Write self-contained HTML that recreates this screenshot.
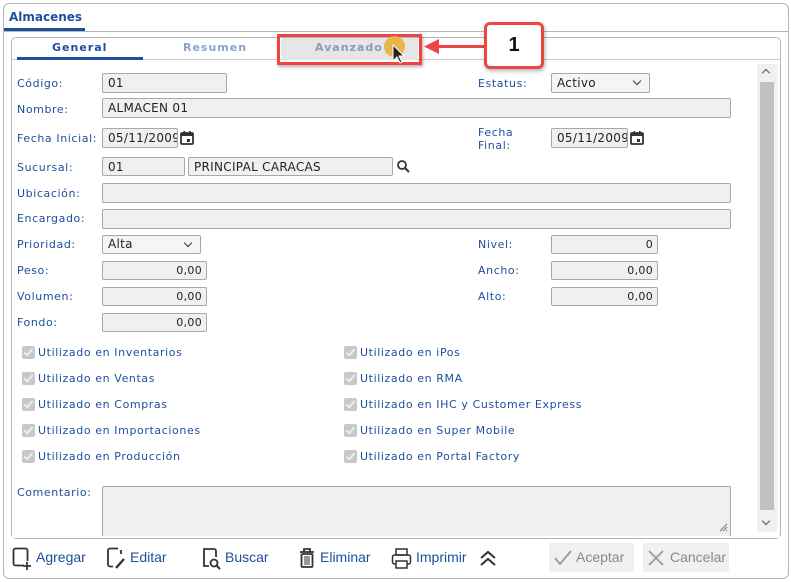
<!DOCTYPE html><html><head><style>
*{box-sizing:border-box;margin:0;padding:0}
body{width:791px;height:582px;background:#fff;position:relative;overflow:hidden;font-family:"DejaVu Sans","Liberation Sans",sans-serif;font-size:11px;color:#1d4f9c}
.a{position:absolute}
.l{position:absolute;letter-spacing:0.6px;line-height:13px}
.i{position:absolute;border:1px solid #a8a8a8;background:#f0f0f0;border-radius:2px;color:#222;font-size:12px;letter-spacing:0.3px;padding-left:5px;line-height:18px}
.r{text-align:right;padding-right:4px;font-size:11px}
.cb{position:absolute;width:13px;height:13px;background:#c8c8c8;border-radius:2px}
.cb:after{content:"";position:absolute;left:4px;top:1px;width:3px;height:7px;border:solid #eee;border-width:0 2px 2px 0;transform:rotate(40deg)}
.sel:after{content:"";position:absolute;right:9px;top:4px;width:5px;height:5px;border:solid #333;border-width:0 1.3px 1.3px 0;transform:rotate(45deg)}
.bt{position:absolute;top:549px;font-family:"Liberation Sans Narrow","Liberation Sans",sans-serif;font-size:14px;color:#1d4f9c}
</style></head><body>
<div class="a" style="left:3px;top:3px;width:786px;height:576px;border:1px solid #b5b5b5;border-radius:6px"></div>
<div class="a" style="left:3px;top:31px;width:786px;height:1px;background:#b5b5b5"></div>
<div class="a" style="left:9px;top:10px;font-weight:bold;font-size:12px;color:#1d4f9c;font-family:'DejaVu Sans',sans-serif">Almacenes</div>
<div class="a" style="left:4px;top:28px;width:81px;height:3px;background:#1d4f9c"></div>
<div class="a" style="left:11px;top:37px;width:770px;height:502px;border:1px solid #b5b5b5;border-radius:5px"></div>
<div class="a" style="left:12px;top:59px;width:768px;height:1px;background:#c8c8c8"></div>
<div class="a" style="left:52px;top:41px;font-weight:bold;letter-spacing:1px;color:#1d4f9c">General</div>
<div class="a" style="left:17px;top:57px;width:126px;height:3px;background:#1d4f9c"></div>
<div class="a" style="left:183px;top:41px;font-weight:bold;letter-spacing:1px;color:#8aa4cf">Resumen</div>
<div class="a" style="left:281px;top:38px;width:137px;height:22px;background:#e6e6e6"></div>
<div class="a" style="left:315px;top:41px;font-weight:bold;letter-spacing:1px;color:#8a9ab8">Avanzado</div>

<div class="l" style="left:17px;top:77px">Código:</div><div class="i" style="left:102px;top:73px;width:125px;height:20px">01</div>
<div class="l" style="left:478px;top:77px">Estatus:</div><div class="i sel" style="left:551px;top:73px;width:99px;height:20px;background:#f5f5f5">Activo</div>
<div class="l" style="left:17px;top:103px">Nombre:</div><div class="i" style="left:102px;top:98px;width:629px;height:20px">ALMACEN 01</div>
<div class="l" style="left:17px;top:132px">Fecha Inicial:</div><div class="i" style="left:102px;top:128px;width:76px;height:20px;overflow:hidden;white-space:nowrap">05/11/2009</div>
<svg class="a" style="left:180px;top:131px" width="14" height="14"><rect x="1" y="2" width="12" height="11" rx="1" fill="none" stroke="#333" stroke-width="1.8"/><rect x="1" y="2" width="12" height="3" fill="#333"/><rect x="3.5" y="0" width="1.6" height="3" fill="#333"/><rect x="9" y="0" width="1.6" height="3" fill="#333"/><rect x="7" y="8" width="3" height="3" fill="#333"/></svg>
<div class="l" style="left:478px;top:126px">Fecha<br>Final:</div><div class="i" style="left:551px;top:128px;width:77px;height:20px;overflow:hidden;white-space:nowrap">05/11/2009</div>
<svg class="a" style="left:630px;top:131px" width="14" height="14"><rect x="1" y="2" width="12" height="11" rx="1" fill="none" stroke="#333" stroke-width="1.8"/><rect x="1" y="2" width="12" height="3" fill="#333"/><rect x="3.5" y="0" width="1.6" height="3" fill="#333"/><rect x="9" y="0" width="1.6" height="3" fill="#333"/><rect x="7" y="8" width="3" height="3" fill="#333"/></svg>
<div class="l" style="left:17px;top:161px">Sucursal:</div><div class="i" style="left:102px;top:157px;width:83px;height:19px">01</div><div class="i" style="left:188px;top:157px;width:205px;height:19px">PRINCIPAL CARACAS</div>
<svg class="a" style="left:396px;top:159px" width="15" height="15"><circle cx="6" cy="6" r="4" fill="none" stroke="#333" stroke-width="1.8"/><line x1="9" y1="9" x2="13" y2="13" stroke="#333" stroke-width="2"/></svg>
<div class="l" style="left:17px;top:187px">Ubicación:</div><div class="i" style="left:102px;top:183px;width:629px;height:20px"></div>
<div class="l" style="left:17px;top:212px">Encargado:</div><div class="i" style="left:102px;top:209px;width:629px;height:20px"></div>
<div class="l" style="left:17px;top:238px">Prioridad:</div><div class="i sel" style="left:102px;top:235px;width:99px;height:19px;background:#f5f5f5;line-height:17px">Alta</div>
<div class="l" style="left:478px;top:238px">Nivel:</div><div class="i r" style="left:551px;top:235px;width:107px;height:19px;line-height:17px">0</div>
<div class="l" style="left:17px;top:264px">Peso:</div><div class="i r" style="left:102px;top:261px;width:105px;height:19px;line-height:17px">0,00</div>
<div class="l" style="left:478px;top:264px">Ancho:</div><div class="i r" style="left:551px;top:261px;width:107px;height:19px;line-height:17px">0,00</div>
<div class="l" style="left:17px;top:290px">Volumen:</div><div class="i r" style="left:102px;top:287px;width:105px;height:19px;line-height:17px">0,00</div>
<div class="l" style="left:478px;top:290px">Alto:</div><div class="i r" style="left:551px;top:287px;width:107px;height:19px;line-height:17px">0,00</div>
<div class="l" style="left:17px;top:316px">Fondo:</div><div class="i r" style="left:102px;top:313px;width:105px;height:19px;line-height:17px">0,00</div>

<div class="cb" style="left:22px;top:346px"></div><div class="l" style="left:38px;top:346px">Utilizado en Inventarios</div>
<div class="cb" style="left:22px;top:372px"></div><div class="l" style="left:38px;top:372px">Utilizado en Ventas</div>
<div class="cb" style="left:22px;top:398px"></div><div class="l" style="left:38px;top:398px">Utilizado en Compras</div>
<div class="cb" style="left:22px;top:424px"></div><div class="l" style="left:38px;top:424px">Utilizado en Importaciones</div>
<div class="cb" style="left:22px;top:450px"></div><div class="l" style="left:38px;top:450px">Utilizado en Producción</div>
<div class="cb" style="left:344px;top:346px"></div><div class="l" style="left:360px;top:346px">Utilizado en iPos</div>
<div class="cb" style="left:344px;top:372px"></div><div class="l" style="left:360px;top:372px">Utilizado en RMA</div>
<div class="cb" style="left:344px;top:398px"></div><div class="l" style="left:360px;top:398px">Utilizado en IHC y Customer Express</div>
<div class="cb" style="left:344px;top:424px"></div><div class="l" style="left:360px;top:424px">Utilizado en Super Mobile</div>
<div class="cb" style="left:344px;top:450px"></div><div class="l" style="left:360px;top:450px">Utilizado en Portal Factory</div>

<div class="l" style="left:17px;top:486px">Comentario:</div>
<div class="i" style="left:102px;top:486px;width:629px;height:50px;border-bottom:none;border-radius:2px 2px 0 0"></div>
<svg class="a" style="left:718px;top:522px" width="10" height="10"><path d="M9 2L2 9M9 5L5 9M9 8L8 9" stroke="#777" stroke-width="1"/></svg>
<div class="a" style="left:12px;top:536px;width:768px;height:2px;background:#fff"></div>

<div class="a" style="left:757px;top:64px;width:20px;height:468px;background:#f0f0f0"></div>
<div class="a" style="left:760px;top:82px;width:14px;height:428px;background:#c1c1c1"></div>
<div class="a" style="left:763px;top:70px;width:6px;height:6px;border:solid #555;border-width:1.5px 0 0 1.5px;transform:rotate(45deg)"></div>
<div class="a" style="left:763px;top:518px;width:6px;height:6px;border:solid #555;border-width:0 1.5px 1.5px 0;transform:rotate(45deg)"></div>

<svg class="a" style="left:12px;top:547px" width="22" height="24"><rect x="1.5" y="1.5" width="14" height="17" rx="2" fill="none" stroke="#333" stroke-width="1.8"/><rect x="12" y="14" width="6" height="6" fill="#fff"/><path d="M15 15v8M11 19h8" stroke="#333" stroke-width="1.8"/></svg>
<div class="bt" style="left:36px">Agregar</div>
<svg class="a" style="left:106px;top:547px" width="22" height="24"><path d="M12 1.5H4a2 2 0 0 0-2 2v14a2 2 0 0 0 2 2h3M15 7V3" fill="none" stroke="#333" stroke-width="1.8"/><path d="M10 21l8-9" stroke="#333" stroke-width="2.4"/></svg>
<div class="bt" style="left:130px">Editar</div>
<svg class="a" style="left:201px;top:547px" width="22" height="24"><path d="M8 19H3V2h10a2 2 0 0 1 2 2v6" fill="none" stroke="#333" stroke-width="1.8"/><circle cx="13" cy="16" r="3.5" fill="none" stroke="#333" stroke-width="1.8"/><line x1="15.5" y1="18.5" x2="19" y2="22" stroke="#333" stroke-width="2"/></svg>
<div class="bt" style="left:225px">Buscar</div>
<svg class="a" style="left:297px;top:547px" width="20" height="22"><path d="M3 5h14M7 5V2h6v3" fill="none" stroke="#333" stroke-width="1.8"/><rect x="4.5" y="7" width="11" height="13" rx="1" fill="none" stroke="#333" stroke-width="1.8"/><path d="M8 9v9M10 9v9M12 9v9" stroke="#333" stroke-width="1"/></svg>
<div class="bt" style="left:320px">Eliminar</div>
<svg class="a" style="left:391px;top:548px" width="22" height="22"><rect x="5" y="1" width="11" height="6" fill="none" stroke="#333" stroke-width="1.5"/><rect x="1.5" y="7" width="18" height="9" rx="2" fill="none" stroke="#333" stroke-width="1.5"/><rect x="5" y="13" width="11" height="7" fill="#fff" stroke="#333" stroke-width="1.5"/></svg>
<div class="bt" style="left:416px">Imprimir</div>
<svg class="a" style="left:478px;top:549px" width="20" height="18"><path d="M3 9l7-6 7 6M3 16l7-6 7 6" fill="none" stroke="#333" stroke-width="2"/></svg>
<div class="a" style="left:549px;top:543px;width:85px;height:29px;background:#f0f0f0"></div>
<svg class="a" style="left:553px;top:549px" width="20" height="18"><path d="M2 9l5 6L18 2" fill="none" stroke="#999" stroke-width="1.8"/></svg>
<div class="bt" style="left:576px;color:#888">Aceptar</div>
<div class="a" style="left:643px;top:543px;width:86px;height:29px;background:#f0f0f0"></div>
<svg class="a" style="left:647px;top:549px" width="18" height="18"><path d="M2 2l14 14M16 2L2 16" stroke="#999" stroke-width="1.6"/></svg>
<div class="bt" style="left:670px;color:#888">Cancelar</div>

<div class="a" style="left:277px;top:34px;width:145px;height:31px;border:3px solid #ee4444;box-shadow:1px 2px 3px rgba(0,0,0,.3)"></div>
<div class="a" style="left:384px;top:36px;width:21px;height:21px;border-radius:50%;background:#e8b03a;opacity:.9"></div>
<svg class="a" style="left:392px;top:44px" width="14" height="22"><path d="M1 1v16l4-4 3 6 2-1-3-6h5z" fill="#222" stroke="#fff" stroke-width="1"/></svg>
<div class="a" style="left:436px;top:45px;width:50px;height:3px;background:#ee4444"></div>
<svg class="a" style="left:422px;top:38px" width="18" height="18"><path d="M2 8.5L17 1v15z" fill="#ee4444"/></svg>
<div class="a" style="left:484px;top:22px;width:60px;height:47px;border:3px solid #ee4444;border-radius:6px;background:#fff;box-shadow:1px 2px 4px rgba(0,0,0,.3);text-align:center;font:bold 20px 'Liberation Sans',sans-serif;color:#111;line-height:40px">1</div>
</body></html>
